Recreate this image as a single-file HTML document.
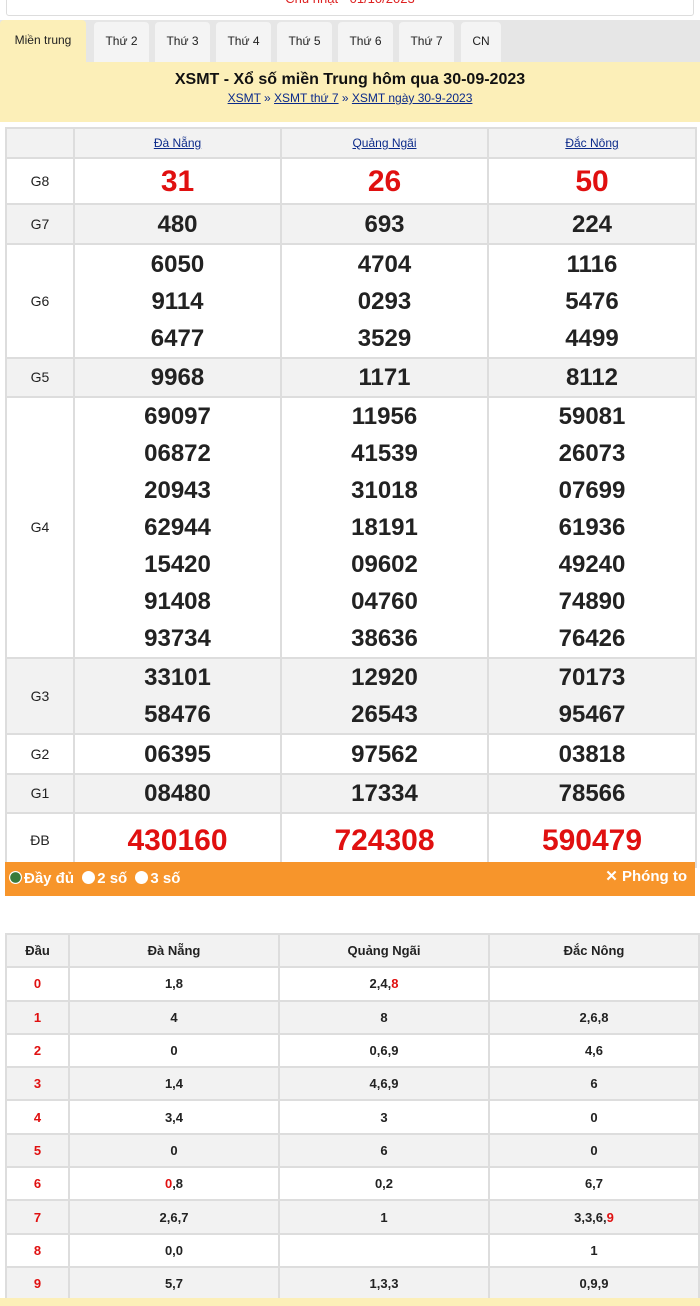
<!DOCTYPE html>
<html><head><meta charset="utf-8"><style>
*{margin:0;padding:0;box-sizing:border-box}
body{width:700px;height:1306px;background:#fff;font-family:"Liberation Sans",Arial,sans-serif;position:relative;overflow:hidden}
.top{position:absolute;left:6px;top:-10px;width:688px;height:26px;border:1px solid #ddd;border-radius:3px;text-align:center;color:#d22;font-size:13px;line-height:16px}
.tabs{position:absolute;left:0;top:20px;width:700px;height:42px;background:#e6e6e6}
.tab{position:absolute;top:2px;height:40px;background:#f4f4f4;font-size:12px;line-height:38px;text-align:center;color:#222;border-radius:4px 4px 0 0}
.tab.a{background:#fcefb8;top:0;height:42px;line-height:40px}
.hd{position:absolute;left:0;top:62px;width:700px;height:60px;background:#fcefb8;text-align:center}
.hd b{display:block;font-size:16px;padding-top:9px;color:#111}
.hd a{font-size:12px;color:#0b2a8a}
table{border-collapse:collapse;position:absolute;table-layout:fixed}
td{border:2px solid #ddd;text-align:center;vertical-align:middle}
#t1{left:5px;top:127px;width:690px}
#t1 td{font-weight:bold;font-size:24px;color:#222;line-height:37px}
#t1 td.l{font-weight:normal;font-size:14px}
#t1 .hh td{font-size:12px;font-weight:normal;line-height:26px}
#t1 .hh a{color:#0b2a8a}
.g{background:#f2f2f2}
.r{color:#e01010!important;font-size:30px!important}
.or{position:absolute;left:5px;top:862px;width:690px;height:34px;background:#f7952b;color:#fff;font-weight:bold;font-size:15px;line-height:34px}
.dot{display:inline-block;width:13px;height:13px;border-radius:50%;background:#fff;vertical-align:-1px;margin:0 2px 0 4px}
#t2{left:5px;top:933px;width:693px}
#t2 tr{height:33.3px}
#t2 td{font-size:13px;font-weight:bold;color:#222}
#t2 td.l{color:#e01010}
.red{color:#e01010}
.foot{position:absolute;left:0;top:1298px;width:700px;height:8px;background:#fcefb8}
</style></head><body>
<div class="top">Chủ nhật - 01/10/2023</div>
<div class="tabs">
<div class="tab a" style="left:0;width:86px">Miền trung</div>
<div class="tab" style="left:94px;width:55px">Thứ 2</div>
<div class="tab" style="left:155px;width:55px">Thứ 3</div>
<div class="tab" style="left:216px;width:55px">Thứ 4</div>
<div class="tab" style="left:277px;width:55px">Thứ 5</div>
<div class="tab" style="left:338px;width:55px">Thứ 6</div>
<div class="tab" style="left:399px;width:55px">Thứ 7</div>
<div class="tab" style="left:461px;width:40px">CN</div>
</div>
<div class="hd"><b>XSMT - Xổ số miền Trung hôm qua 30-09-2023</b><a><u>XSMT</u> » <u>XSMT thứ 7</u> » <u>XSMT ngày 30-9-2023</u></a></div>
<table id="t1">
<colgroup><col style="width:68px"><col style="width:207px"><col style="width:207px"><col style="width:208px"></colgroup>
<tr class="hh g" style="height:30px"><td></td><td><a><u>Đà Nẵng</u></a></td><td><a><u>Quảng Ngãi</u></a></td><td><a><u>Đắc Nông</u></a></td></tr>
<tr style="height:46px"><td class="l">G8</td><td class="r">31</td><td class="r">26</td><td class="r">50</td></tr>
<tr class="g" style="height:40px"><td class="l">G7</td><td>480</td><td>693</td><td>224</td></tr>
<tr style="height:114px"><td class="l">G6</td><td>6050<br>9114<br>6477</td><td>4704<br>0293<br>3529</td><td>1116<br>5476<br>4499</td></tr>
<tr class="g" style="height:38px"><td class="l">G5</td><td>9968</td><td>1171</td><td>8112</td></tr>
<tr style="height:260px"><td class="l">G4</td><td>69097<br>06872<br>20943<br>62944<br>15420<br>91408<br>93734</td><td>11956<br>41539<br>31018<br>18191<br>09602<br>04760<br>38636</td><td>59081<br>26073<br>07699<br>61936<br>49240<br>74890<br>76426</td></tr>
<tr class="g" style="height:75px"><td class="l">G3</td><td>33101<br>58476</td><td>12920<br>26543</td><td>70173<br>95467</td></tr>
<tr style="height:40px"><td class="l">G2</td><td>06395</td><td>97562</td><td>03818</td></tr>
<tr class="g" style="height:38px"><td class="l">G1</td><td>08480</td><td>17334</td><td>78566</td></tr>
<tr style="height:54px"><td class="l">ĐB</td><td class="r">430160</td><td class="r">724308</td><td class="r">590479</td></tr>
</table>
<div class="or"><span class="dot" style="background:radial-gradient(#3a7a3a 55%,#fff 60%)"></span>Đầy đủ <span class="dot"></span>2 số <span class="dot"></span>3 số<span style="position:absolute;right:8px;top:-2px">✕ Phóng to</span></div>
<table id="t2">
<colgroup><col style="width:63px"><col style="width:210px"><col style="width:210px"><col style="width:210px"></colgroup>
<tr class="g"><td style="color:#222">Đầu</td><td>Đà Nẵng</td><td>Quảng Ngãi</td><td>Đắc Nông</td></tr>
<tr><td class="l">0</td><td>1,8</td><td>2,4,<span class="red">8</span></td><td></td></tr>
<tr class="g"><td class="l">1</td><td>4</td><td>8</td><td>2,6,8</td></tr>
<tr><td class="l">2</td><td>0</td><td>0,6,9</td><td>4,6</td></tr>
<tr class="g"><td class="l">3</td><td>1,4</td><td>4,6,9</td><td>6</td></tr>
<tr><td class="l">4</td><td>3,4</td><td>3</td><td>0</td></tr>
<tr class="g"><td class="l">5</td><td>0</td><td>6</td><td>0</td></tr>
<tr><td class="l">6</td><td><span class="red">0</span>,8</td><td>0,2</td><td>6,7</td></tr>
<tr class="g"><td class="l">7</td><td>2,6,7</td><td>1</td><td>3,3,6,<span class="red">9</span></td></tr>
<tr><td class="l">8</td><td>0,0</td><td></td><td>1</td></tr>
<tr class="g"><td class="l">9</td><td>5,7</td><td>1,3,3</td><td>0,9,9</td></tr>
</table>
<div class="foot"></div>
</body></html>
